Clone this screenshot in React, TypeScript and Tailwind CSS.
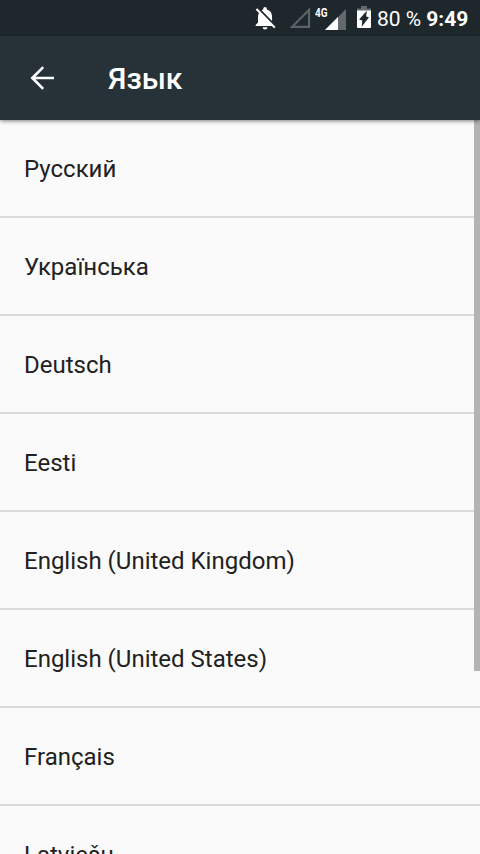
import React from "react"

const languages = [
  "Русский",
  "Українська",
  "Deutsch",
  "Eesti",
  "English (United Kingdom)",
  "English (United States)",
  "Français",
  "Latviešu",
]

export default function App() {
  return (
    <div className="relative flex h-[854px] w-[480px] flex-col overflow-hidden bg-[#fafafa] font-['Roboto',sans-serif] text-[#212121]">
      <StatusBar />

      {/* Toolbar */}
      <header className="z-10 flex h-[84px] shrink-0 items-center bg-[#263238] pl-6 text-white shadow-[0_1px_4px_rgba(0,0,0,0.5)]">
        <button aria-label="Назад" className="mr-12 h-9 w-9">
          <svg viewBox="0 0 24 24" className="h-9 w-9" fill="currentColor">
            <path d="M20 11.100H7.700l5.700-5.700L12.200 4.100 4.300 12l7.900 7.900 1.200-1.300L7.700 12.900H20z" />
          </svg>
        </button>
        <h1 className="pt-0.5 text-[30px] leading-9 font-medium">Язык</h1>
      </header>

      <ul className="shrink-0">
        {languages.map((name) => (
          <li
            key={name}
            className="flex h-[98px] items-center border-b-2 border-[#dadada] px-6 pt-0.5 text-2xl"
          >
            {name}
          </li>
        ))}
      </ul>

      {/* Scrollbar thumb over the list */}
      <div className="absolute top-[120px] right-0 h-[551px] w-1.5 bg-[#b3b3b3]" />
    </div>
  )
}

function StatusBar() {
  return (
    <div className="flex h-9 shrink-0 bg-[#1e272c] text-white">
      <svg viewBox="0 0 376 36" className="h-9 w-[376px] shrink-0">
        {/* Muted bell */}
        <path
          transform="translate(251 4.200) scale(1.170 1.150)"
          fill="#fff"
          d="M20 18.690L7.840 6.140 5.270 3.490 4 4.760l2.800 2.800v.01c-.52.99-.8 2.160-.8 3.420v5l-2 2v1h13.730l2 2L21 19.720l-1-1.030zM12 22c1.110 0 2-.89 2-2h-4c0 1.110.89 2 2 2zM18 14.680V11c0-3.080-1.640-5.640-4.500-6.320V4c0-.83-.67-1.500-1.500-1.500s-1.500.67-1.500 1.500v.68c-.5.12-.97.290-1.400.57L18 14.680z"
        />

        {/* Empty SIM slot */}
        <path d="M309 10v16.800h-16.800z" fill="none" stroke="#5c6367" strokeWidth="2.200" />

        {/* Mobile signal */}
        <path d="M346 9v21h-21z" fill="#62686c" />
        <path d="M338 17v13h-13z" fill="#fff" />
        <text x="315" y="16.500" fill="#fff" fontSize="12" fontWeight="700" textLength="12.500" lengthAdjust="spacingAndGlyphs">
          4G
        </text>

        {/* Charging battery */}
        <path d="M361 6h6v2.500h4v3h-14v-3h4z" fill="#62686c" />
        <path d="M357 10.500h14v16.500a1 1 0 0 1-1 1h-12a1 1 0 0 1-1-1z" fill="#fff" />
        <path d="M366.800 10.800l-.6 5.700 2.800.8-7.300 9.400.6-6.300-3.200-.9z" fill="#1e272c" />
      </svg>
      <span className="ml-px pt-px text-[21px] leading-9 whitespace-nowrap">80 %</span>
      <span className="ml-[5px] pt-px text-[21px] leading-9 font-bold">9:49</span>
    </div>
  )
}
